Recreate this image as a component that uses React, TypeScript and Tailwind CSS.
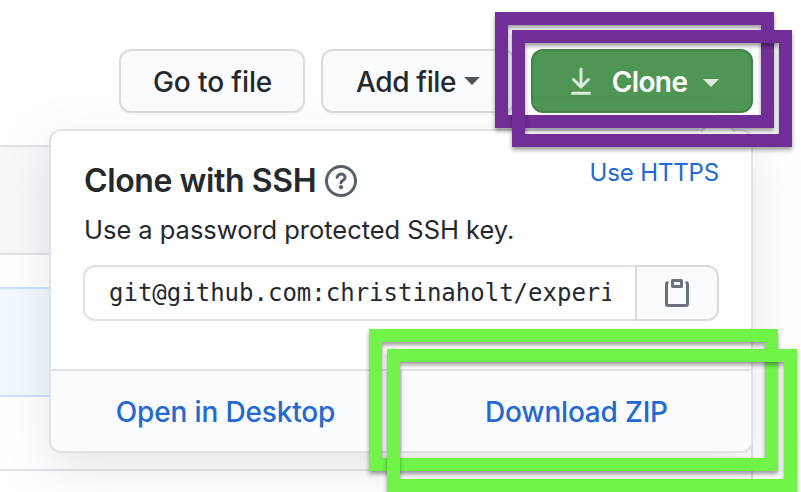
import type { ReactNode } from 'react';

const ui = "font-['Inter','Liberation_Sans',sans-serif]";

function Caret({ className }: { className: string }) {
  return (
    <svg className={className} width="16" height="8" viewBox="0 0 16 8" fill="currentColor" aria-hidden="true">
      <path d="M0 0h16L8 8z" />
    </svg>
  );
}

function ToolbarButton({ children, className }: { children: ReactNode; className: string }) {
  return (
    <button
      className={`flex h-16 items-center rounded-xl border-2 border-[#d9dbdc] bg-[#fafbfc] text-[28px] leading-none font-medium text-[#24292e] shadow-[0_2px_0_rgba(27,31,35,0.03)] ${className}`}
    >
      {children}
    </button>
  );
}

function Toolbar() {
  return (
    <div className="flex h-[145px] shrink-0 items-start pt-[49px] pl-[119px]">
      <ToolbarButton className="w-[186px] pl-8">
        <span className="pt-px tracking-[-0.1px] whitespace-nowrap">Go to file</span>
      </ToolbarButton>
      <ToolbarButton className="ml-4 w-[194px] pl-[33px]">
        <span className="w-[100px] pt-px tracking-[-0.35px] whitespace-nowrap">Add file</span>
        <Caret className="ml-2 text-[#4f5459]" />
      </ToolbarButton>
      <button className="ml-4 flex h-16 w-[222px] items-center rounded-xl border-2 border-[#46834b] bg-[#4f9655] pl-[38px] text-[28px] leading-none font-semibold text-white">
        <svg width="20" height="28" viewBox="0 0 20 28" fill="none" stroke="#dbeadc" strokeWidth="3" strokeLinecap="round" strokeLinejoin="round" aria-hidden="true">
          <path d="M10 2v18M2.5 12.5 10 20l7.5-7.5M1.5 26.3h17" />
        </svg>
        <span className="ml-5 w-[77px] pt-px tracking-[-0.6px]">Clone</span>
        <Caret className="mt-1 ml-[15px] text-[#dbeadc]" />
      </button>
    </div>
  );
}

function FileList() {
  return (
    <div className="flex w-[753px] grow flex-col border-t-2 border-r-2 border-[#e1e2e8] bg-white">
      <div className="h-[108px] shrink-0 border-b-2 border-[#e1e2e8] bg-[#f6f8fa]" />
      <div className="h-8 shrink-0" />
      <div className="h-[110px] shrink-0 border-y-2 border-[#c8e1ff] bg-[#f1f8ff]" />
      <div className="h-[74px] shrink-0 border-b-2 border-[#e1e2e8]" />
    </div>
  );
}

function ClonePanel() {
  return (
    <section className="absolute top-[129px] left-[49px] flex h-[324px] w-[704px] flex-col rounded-xl border-2 border-[#e1e2e6] bg-white text-[#24292e] shadow-[0_16px_48px_rgba(149,157,165,0.25)]">
      <svg className="absolute -top-[17px] left-[650px]" width="34" height="18" viewBox="0 0 34 18" fill="#fff" stroke="#d5d7d9" strokeWidth="2" aria-hidden="true">
        <path d="M0 17.5 17 1l17 16.5" />
      </svg>
      <div className="flex grow flex-col px-8">
        <div className="flex items-start justify-between pt-[26px]">
          <h2 className="flex h-11 items-center text-[32px] leading-none font-semibold">
            <span className="mt-[3px] ml-px tracking-[-0.4px] whitespace-nowrap">Clone with SSH</span>
            <svg className="mt-1 ml-[9px] shrink-0" width="32" height="32" viewBox="0 0 32 32" fill="none" stroke="#586069" aria-hidden="true">
              <circle cx="16" cy="16" r="14.5" strokeWidth="3" />
              <path d="M12.100 12.300c.7-3 3.900-3.900 6.100-2.800 2.200 1.100 2.400 3.600.9 5-1.300 1.200-3.100 1.400-3.100 3.200" strokeWidth="3" strokeLinecap="round" />
              <circle cx="16" cy="22.200" r="2.100" fill="#586069" stroke="none" />
            </svg>
          </h2>
          <a className="pt-[2px] text-[24px] leading-7 tracking-[-0.150px] whitespace-nowrap text-[#2468d1]">Use HTTPS</a>
        </div>
        <p className="mt-[13px] ml-px text-[25.500px] leading-8 tracking-[-0.030px] whitespace-nowrap">Use a password protected SSH key.</p>
        <div className="mt-[19px] flex h-14 w-[636px]">
          <div className="flex w-[552px] items-center overflow-hidden rounded-l-xl border-2 border-r-0 border-[#e1e2e8] pr-6 pl-6 shadow-[inset_0_2px_0_rgba(225,228,232,0.2)]">
            <span className="block w-[504px] overflow-hidden font-['DejaVu_Sans_Mono','Liberation_Mono',monospace] text-[24px] leading-8 whitespace-nowrap">
              git@github.com:christinaholt/experi
            </span>
          </div>
          <button className="flex w-[84px] items-center justify-center rounded-r-xl border-2 border-[#d9dbdc] bg-[#fafbfc] text-[#6a737d]" aria-label="Copy">
            <svg width="24" height="28" viewBox="0 0 24 28" fill="none" stroke="currentColor" strokeWidth="3" strokeLinecap="round" aria-hidden="true">
              <path d="M2.300 3.700C1.600 4 1.500 4.400 1.500 5.100v20q0 1.400 1.400 1.400h18.200q1.400 0 1.400-1.400v-20c0-.7-.1-1.100-.8-1.400" />
              <rect x="7.500" y="1.500" width="9" height="6" strokeLinejoin="round" />
            </svg>
          </button>
        </div>
      </div>
      <div className="flex h-[82px] shrink-0 rounded-b-[10px] border-t-2 border-[#e1e2e8] bg-[#fafbfc] text-[28px] leading-none font-medium text-[#2468d1]">
        <a className="flex w-[351px] items-center justify-center border-r-2 border-[#e1e2e8] pt-px tracking-[-0.150px] whitespace-nowrap">Open in Desktop</a>
        <a className="flex grow items-center justify-center pt-px tracking-[-0.200px] whitespace-nowrap">Download ZIP</a>
      </div>
    </section>
  );
}

function Highlight({ className }: { className: string }) {
  return (
    <div className={`pointer-events-none absolute border-[13px] drop-shadow-[0_3px_2px_rgba(0,0,0,0.38)] ${className}`} />
  );
}

export default function App() {
  return (
    <main className={`relative flex h-[492px] w-[801px] flex-col overflow-hidden bg-white antialiased ${ui}`}>
      <Toolbar />
      <FileList />
      <ClonePanel />
      <Highlight className="top-3 left-[495px] h-[116px] w-[279px] border-[#702e96]" />
      <Highlight className="top-[30px] left-[512px] h-[117px] w-[280px] border-[#702e96]" />
      <Highlight className="top-[329px] left-[369px] h-[142px] w-[409px] border-[#70f448]" />
      <Highlight className="top-[349px] left-[387px] h-[143px] w-[410px] border-[#70f448]" />
    </main>
  );
}
